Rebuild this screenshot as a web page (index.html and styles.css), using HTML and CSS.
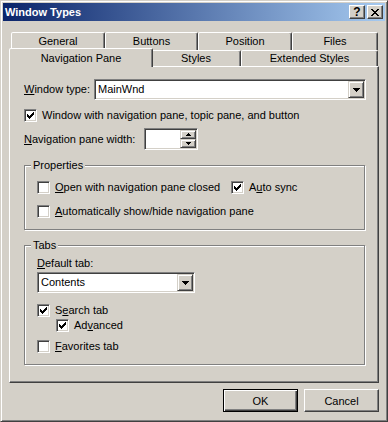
FILE: index.html
```html
<!DOCTYPE html>
<html lang="en">
<head>
    <meta charset="UTF-8">
    <title>Window Types</title>
    <link rel="stylesheet" href="styles.css">
</head>
<body>
    <div class="window">
        <div class="titlebar">
            <span class="title">Window Types</span>
            <div class="caption-buttons">
                <span class="cap-btn">?</span>
                <span class="cap-btn">
                    <svg width="8" height="7" viewBox="0 0 8 7"><path d="M0 0h2v1H0zM6 0h2v1H6zM1 1h2v1H1zM5 1h2v1H5zM2 2h4v1H2zM3 3h2v1H3zM2 4h4v1H2zM1 5h2v1H1zM5 5h2v1H5zM0 6h2v1H0zM6 6h2v1H6z" fill="#000"/></svg>
                </span>
            </div>
        </div>

        <div class="dialog">
            <div class="tab-row back">
                <div class="tab w-general">General</div>
                <div class="tab w-buttons">Buttons</div>
                <div class="tab w-position">Position</div>
                <div class="tab w-files">Files</div>
            </div>
            <div class="tab-row front">
                <div class="tab w-nav selected">Navigation Pane</div>
                <div class="tab w-styles">Styles</div>
                <div class="tab w-extended">Extended Styles</div>
            </div>

            <div class="panel">
                <div class="field">
                    <span class="label w-type"><u>W</u>indow type:</span>
                    <div class="combo grow">
                        <span class="combo-text">MainWnd</span>
                        <span class="drop"><svg width="7" height="4" viewBox="0 0 7 4"><path d="M0 0h7v1H0zM1 1h5v1H1zM2 2h3v1H2zM3 3h1v1H3z" fill="#000"/></svg></span>
                    </div>
                </div>

                <div class="cb gap-9">
                    <span class="check"><svg width="11" height="11" viewBox="0 0 11 11"><path d="M2 4h1v3H2zM3 5h1v3H3zM4 6h1v3H4zM5 5h1v3H5zM6 4h1v3H6zM7 3h1v3H7zM8 2h1v3H8z" fill="#000"/></svg></span>
                    <span>Window with navigation pane, topic pane, and button</span>
                </div>

                <div class="field gap-6">
                    <span class="label w-navwidth"><u>N</u>avigation pane width:</span>
                    <div class="spin">
                        <div class="spin-btns">
                            <span class="spin-btn"><svg width="5" height="3" viewBox="0 0 5 3"><path d="M2 0h1v1H2zM1 1h3v1H1zM0 2h5v1H0z" fill="#000"/></svg></span>
                            <span class="spin-btn"><svg width="5" height="3" viewBox="0 0 5 3"><path d="M0 0h5v1H0zM1 1h3v1H1zM2 2h1v1H2z" fill="#000"/></svg></span>
                        </div>
                    </div>
                </div>

                <div class="group group-props">
                    <span class="group-title">Properties</span>
                    <div class="cb-line gap-9">
                        <div class="cb w-open">
                            <span class="check"></span>
                            <span><u>O</u>pen with navigation pane closed</span>
                        </div>
                        <div class="cb">
                            <span class="check"><svg width="11" height="11" viewBox="0 0 11 11"><path d="M2 4h1v3H2zM3 5h1v3H3zM4 6h1v3H4zM5 5h1v3H5zM6 4h1v3H6zM7 3h1v3H7zM8 2h1v3H8z" fill="#000"/></svg></span>
                            <span>A<u>u</u>to sync</span>
                        </div>
                    </div>
                    <div class="cb gap-11">
                        <span class="check"></span>
                        <span><u>A</u>utomatically show/hide navigation pane</span>
                    </div>
                </div>

                <div class="group group-tabs">
                    <span class="group-title">Tabs</span>
                    <span class="label gap-5"><u>D</u>efault tab:</span>
                    <div class="combo w-contents gap-2">
                        <span class="combo-text">Contents</span>
                        <span class="drop"><svg width="7" height="4" viewBox="0 0 7 4"><path d="M0 0h7v1H0zM1 1h5v1H1zM2 2h3v1H2zM3 3h1v1H3z" fill="#000"/></svg></span>
                    </div>
                    <div class="cb gap-11">
                        <span class="check"><svg width="11" height="11" viewBox="0 0 11 11"><path d="M2 4h1v3H2zM3 5h1v3H3zM4 6h1v3H4zM5 5h1v3H5zM6 4h1v3H6zM7 3h1v3H7zM8 2h1v3H8z" fill="#000"/></svg></span>
                        <span>S<u>e</u>arch tab</span>
                    </div>
                    <div class="cb indent gap-2">
                        <span class="check"><svg width="11" height="11" viewBox="0 0 11 11"><path d="M2 4h1v3H2zM3 5h1v3H3zM4 6h1v3H4zM5 5h1v3H5zM6 4h1v3H6zM7 3h1v3H7zM8 2h1v3H8z" fill="#000"/></svg></span>
                        <span>Ad<u>v</u>anced</span>
                    </div>
                    <div class="cb gap-8">
                        <span class="check"></span>
                        <span><u>F</u>avorites tab</span>
                    </div>
                </div>
            </div>

            <div class="buttons">
                <button class="btn default">OK</button>
                <button class="btn">Cancel</button>
            </div>
        </div>
    </div>
</body>
</html>
```

FILE: styles.css
```css
* {
    box-sizing: border-box;
}

body {
    margin: 0;
    background-color: #d4d0c8;
    font-family: "Liberation Sans", Arial, sans-serif;
    font-size: 11px;
    line-height: 13px;
    color: #000;
}

/* window frame */
.window {
    width: 388px;
    height: 422px;
    background-color: #d4d0c8;
    border: 1px solid;
    border-color: #d4d0c8 #404040 #404040 #d4d0c8;
    box-shadow: inset 1px 1px #fff, inset -1px -1px #808080;
    padding: 2px;
}

.titlebar {
    height: 18px;
    display: flex;
    align-items: center;
    justify-content: space-between;
    padding: 0 2px;
    background: linear-gradient(to right, #0a246a, #a6caf0);
}

.title {
    color: #fff;
    font-weight: bold;
}

.caption-buttons {
    display: flex;
    gap: 2px;
}

.cap-btn {
    width: 16px;
    height: 14px;
    display: flex;
    align-items: center;
    justify-content: center;
    background-color: #d4d0c8;
    border: 1px solid;
    border-color: #fff #404040 #404040 #fff;
    box-shadow: inset -1px -1px #808080;
    font-weight: bold;
    font-size: 12px;
}

.dialog {
    padding: 11px 6px 0;
}

/* tabs */
.tab-row {
    display: flex;
    padding-left: 2px;
}

.tab-row.back {
    height: 18px;
}

.tab-row.front {
    height: 16px;
}

.tab {
    height: 100%;
    display: flex;
    align-items: center;
    justify-content: center;
    border: 1px solid;
    border-bottom: 0;
    border-color: #fff #404040 transparent #fff;
    border-radius: 2px 2px 0 0;
    box-shadow: inset -1px 0 #808080;
    background-color: #d4d0c8;
}

.tab.selected {
    position: relative;
    z-index: 1;
    height: 19px;
    margin: -2px -2px -1px;
}

.w-general { width: 94px; }
.w-buttons { width: 93px; }
.w-position { width: 94px; }
.w-files { width: 86px; }
.w-nav { width: 144px; }
.w-styles { width: 90px; }
.w-extended { width: 137px; }

.panel {
    height: 317px;
    border: 1px solid;
    border-color: #fff #404040 #404040 #fff;
    box-shadow: inset -1px -1px #808080;
    padding: 12px 12px 0 14px;
}

/* form controls */
.field {
    display: flex;
    align-items: center;
}

.label {
    white-space: nowrap;
}

.w-type { width: 70px; }
.w-navwidth { width: 120px; }

.combo {
    height: 21px;
    display: flex;
    background-color: #fff;
    border: 1px solid;
    border-color: #808080 #fff #fff #808080;
    box-shadow: inset 1px 1px #404040, inset -1px -1px #d4d0c8;
    padding: 1px;
}

.grow { flex: 1; }
.w-contents { width: 158px; }

.combo-text {
    flex: 1;
    padding-left: 2px;
    line-height: 17px;
}

.drop {
    width: 16px;
    height: 17px;
    display: flex;
    align-items: center;
    justify-content: center;
    background-color: #d4d0c8;
    border: 1px solid;
    border-color: #d4d0c8 #404040 #404040 #d4d0c8;
    box-shadow: inset 1px 1px #fff, inset -1px -1px #808080;
}

.spin {
    width: 54px;
    height: 22px;
    display: flex;
    justify-content: flex-end;
    background-color: #fff;
    border: 1px solid;
    border-color: #808080 #fff #fff #808080;
    box-shadow: inset 1px 1px #404040, inset -1px -1px #d4d0c8;
    padding: 1px;
}

.spin-btns {
    width: 16px;
    display: flex;
    flex-direction: column;
}

.spin-btn {
    flex: 1;
    display: flex;
    align-items: center;
    justify-content: center;
    background-color: #d4d0c8;
    border: 1px solid;
    border-color: #d4d0c8 #404040 #404040 #d4d0c8;
    box-shadow: inset 1px 1px #fff, inset -1px -1px #808080;
}

.cb {
    display: flex;
    align-items: center;
    gap: 5px;
    height: 13px;
    white-space: nowrap;
}

.cb-line {
    display: flex;
}

.w-open { width: 194px; }
.indent { margin-left: 19px; }

.check {
    width: 13px;
    height: 13px;
    flex-shrink: 0;
    background-color: #fff;
    border: 1px solid;
    border-color: #808080 #fff #fff #808080;
    box-shadow: inset 1px 1px #404040, inset -1px -1px #d4d0c8;
}

.check svg {
    display: block;
}

/* group boxes */
.group {
    width: 341px;
    display: flex;
    flex-direction: column;
    align-items: flex-start;
    border: 1px solid #808080;
    box-shadow: inset 1px 1px #fff, 1px 1px #fff;
    padding: 0 12px 11px;
}

.group-props { margin-top: 15px; }
.group-tabs { margin-top: 15px; }

.group-title {
    margin: -7px 0 0 -6px;
    padding: 0 2px;
    background-color: #d4d0c8;
}

.gap-2 { margin-top: 2px; }
.gap-5 { margin-top: 5px; }
.gap-6 { margin-top: 6px; }
.gap-8 { margin-top: 8px; }
.gap-9 { margin-top: 9px; }
.gap-11 { margin-top: 11px; }

/* dialog buttons */
.buttons {
    display: flex;
    justify-content: flex-end;
    gap: 6px;
    margin-top: 6px;
}

.btn {
    width: 75px;
    height: 23px;
    padding: 0;
    font-family: inherit;
    font-size: 11px;
    color: #000;
    background-color: #d4d0c8;
    border: 1px solid;
    border-color: #fff #404040 #404040 #fff;
    box-shadow: inset -1px -1px #808080;
}

.btn.default {
    border-color: #000;
    box-shadow: inset 1px 1px #fff, inset -1px -1px #404040, inset -2px -2px #808080;
}
```
